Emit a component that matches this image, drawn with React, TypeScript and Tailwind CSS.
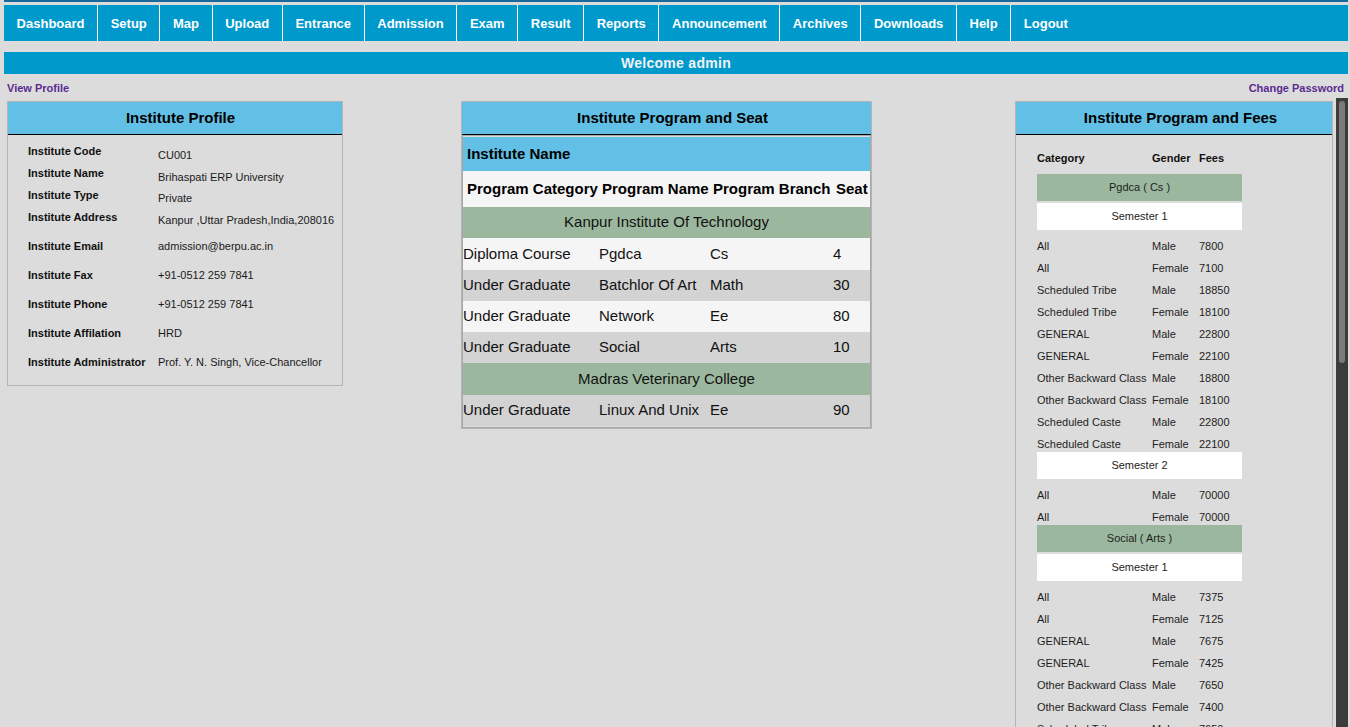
import React from 'react';

const navItems = ['Dashboard', 'Setup', 'Map', 'Upload', 'Entrance', 'Admission', 'Exam', 'Result', 'Reports', 'Announcement', 'Archives', 'Downloads', 'Help', 'Logout'];

const profile: { label: string; value: string; h: string; top: boolean; vm?: string }[] = [
  { label: 'Institute Code', value: 'CU001', h: 'h-[22px]', top: true, vm: 'mt-[4px]' },
  { label: 'Institute Name', value: 'Brihaspati ERP University', h: 'h-[22px]', top: true, vm: 'mt-[4px]' },
  { label: 'Institute Type', value: 'Private', h: 'h-[22px]', top: true, vm: 'mt-[3px]' },
  { label: 'Institute Address', value: 'Kanpur ,Uttar Pradesh,India,208016', h: 'h-[21px]', top: true, vm: 'mt-[3px]' },
  { label: 'Institute Email', value: 'admission@berpu.ac.in', h: 'h-[29px]', top: false },
  { label: 'Institute Fax', value: '+91-0512 259 7841', h: 'h-[29px]', top: false },
  { label: 'Institute Phone', value: '+91-0512 259 7841', h: 'h-[29px]', top: false },
  { label: 'Institute Affilation', value: 'HRD', h: 'h-[29px]', top: false },
  { label: 'Institute Administrator', value: 'Prof. Y. N. Singh, Vice-Chancellor', h: 'h-[29px]', top: false },
];

type SeatRow = { group?: string; cat?: string; name?: string; branch?: string; seat?: string; bg?: string; h: string };

const seats: SeatRow[] = [
  { group: 'Kanpur Institute Of Technology', h: 'h-[31px]' },
  { cat: 'Diploma Course', name: 'Pgdca', branch: 'Cs', seat: '4', bg: 'bg-[#f5f5f5]', h: 'h-[32px]' },
  { cat: 'Under Graduate', name: 'Batchlor Of Art', branch: 'Math', seat: '30', bg: 'bg-[#d3d3d3]', h: 'h-[31px]' },
  { cat: 'Under Graduate', name: 'Network', branch: 'Ee', seat: '80', bg: 'bg-[#f5f5f5]', h: 'h-[31px]' },
  { cat: 'Under Graduate', name: 'Social', branch: 'Arts', seat: '10', bg: 'bg-[#d3d3d3]', h: 'h-[31px]' },
  { group: 'Madras Veterinary College', h: 'h-[32px]' },
  { cat: 'Under Graduate', name: 'Linux And Unix', branch: 'Ee', seat: '90', bg: 'bg-[#d3d3d3]', h: 'h-[31px]' },
];

type Fee = [string, string, string];
type Semester = { title: string; fees: Fee[] };
type Program = { title: string; semesters: Semester[] };

const both = (cat: string, m: string, f: string): Fee[] => [[cat, 'Male', m], [cat, 'Female', f]];

const programs: Program[] = [
  {
    title: 'Pgdca ( Cs )',
    semesters: [
      {
        title: 'Semester 1',
        fees: [
          ...both('All', '7800', '7100'),
          ...both('Scheduled Tribe', '18850', '18100'),
          ...both('GENERAL', '22800', '22100'),
          ...both('Other Backward Class', '18800', '18100'),
          ...both('Scheduled Caste', '22800', '22100'),
        ],
      },
      { title: 'Semester 2', fees: both('All', '70000', '70000') },
    ],
  },
  {
    title: 'Social ( Arts )',
    semesters: [
      {
        title: 'Semester 1',
        fees: [
          ...both('All', '7375', '7125'),
          ...both('GENERAL', '7675', '7425'),
          ...both('Other Backward Class', '7650', '7400'),
          ...both('Scheduled Tribe', '7650', '7400'),
          ...both('Scheduled Caste', '7650', '7400'),
        ],
      },
    ],
  },
];

const App: React.FC = () => {
  return (
    <div className="h-[727px] overflow-hidden bg-[#dcdcdc] font-['Liberation_Sans',Arial,sans-serif] text-black">
      <div className="ml-[4px] mr-[2px] h-[2px] bg-[#17699b]" />
      <div className="ml-[4px] mr-[2px] mt-[3px] flex h-[36px] bg-[#0099cc]">
        {navItems.map((item, i) => (
          <div
            key={item}
            className={`flex items-center px-[12.6px] pt-[1px] text-[13px] font-bold text-white ${i > 0 ? 'border-l border-white' : ''}`}
          >
            {item}
          </div>
        ))}
      </div>

      <div className="ml-[4px] mr-[2px] mt-[11px] flex h-[22px] items-center justify-center bg-[#0099cc] text-[14px] font-bold tracking-[0.3px] text-[#f2f2f2]">
        Welcome admin
      </div>

      <div className="ml-[7px] mr-[6px] mt-[7px] flex h-[15px] items-center justify-between text-[11px] font-bold text-[#5b2b90]">
        <span>View Profile</span>
        <span>Change Password</span>
      </div>

      <div className="ml-[4px] mr-[2px] mt-[2px] flex items-start">
        {/* left column */}
        <div className="w-[448px] pt-[3px]">
          <div className="ml-[3px] w-[336px] border border-[#b4b4b4]">
            <div className="flex h-[33px] items-center justify-center border-b border-black bg-[#62bfe5] pl-[11px] text-[15px] font-bold">
              Institute Profile
            </div>
            <div className="pb-[8px] pl-[20px] pt-[10px]">
              {profile.map((p) => (
                <div key={p.label} className={`flex ${p.h} ${p.top ? 'items-start' : 'items-center'}`}>
                  <div className="w-[130px] text-[11px] font-bold leading-[13px] text-[#111]">{p.label}</div>
                  <div className={`text-[11px] leading-[13px] text-[#1a1a1a] ${p.vm ?? ''}`}>{p.value}</div>
                </div>
              ))}
            </div>
          </div>
        </div>

        {/* middle column */}
        <div className="flex-1 pt-[3px]">
          <div className="ml-[9px] w-[411px] border border-[#b4b4b4]">
            <div className="flex h-[33px] items-center justify-center border-b border-black bg-[#62bfe5] pl-[12px] text-[15px] font-bold">
              Institute Program and Seat
            </div>
            <div className="border border-[#a8a8a8] py-[1px] text-[15px]">
              <div className="flex h-[34px] items-center bg-[#62bfe5] px-[4px] font-bold">Institute Name</div>
              <div className="grid h-[36px] grid-cols-[136px_111px_123px_1fr] items-center bg-[#f5f5f5] font-bold">
                <div className="pl-[4px]">Program Category</div>
                <div className="pl-[3px]">Program Name</div>
                <div className="pl-[3px]">Program Branch</div>
                <div className="pl-[3px]">Seat</div>
              </div>
              {seats.map((r, i) =>
                r.group ? (
                  <div key={i} className={`flex ${r.h} items-center justify-center bg-[#9bb89e] text-[#111]`}>
                    {r.group}
                  </div>
                ) : (
                  <div key={i} className={`grid ${r.h} grid-cols-[136px_111px_123px_1fr] items-center ${r.bg} text-[#111]`}>
                    <div>{r.cat}</div>
                    <div>{r.name}</div>
                    <div>{r.branch}</div>
                    <div>{r.seat}</div>
                  </div>
                )
              )}
            </div>
          </div>
        </div>

        {/* right column: scrolled panel */}
        <div className="flex h-[629px] w-[336px]">
          <div className="h-[629px] w-[324px] overflow-hidden">
            <div className="ml-[3px] mt-[3px] w-[318px] border border-[#b4b4b4]">
              <div className="flex h-[33px] items-center justify-center border-b border-black bg-[#62bfe5] pl-[13px] text-[15px] font-bold">
                Institute Program and Fees
              </div>
              <div className="pb-[12px] pl-[21px] pt-[15px] text-[11px] text-[#1e1e1e]">
                <div className="w-[205px]">
                  <div className="grid h-[16px] grid-cols-[115px_47px_1fr] items-center font-bold text-[#111]">
                    <div>Category</div>
                    <div>Gender</div>
                    <div>Fees</div>
                  </div>
                  <div className="mt-[8px]">
                    {programs.map((p) => (
                      <div key={p.title}>
                        <div className="flex h-[27px] items-center justify-center bg-[#9bb89e]">{p.title}</div>
                        {p.semesters.map((s, si) => (
                          <div key={s.title}>
                            <div className={`flex h-[27px] items-center justify-center bg-white ${si === 0 ? 'mt-[2px]' : ''}`}>
                              {s.title}
                            </div>
                            <div className="pt-[2px]">
                              {s.fees.map((f, i) => (
                                <div key={i} className="grid h-[22px] grid-cols-[115px_47px_1fr] items-center pt-[6px]">
                                  <div className="whitespace-nowrap">{f[0]}</div>
                                  <div>{f[1]}</div>
                                  <div>{f[2]}</div>
                                </div>
                              ))}
                            </div>
                          </div>
                        ))}
                      </div>
                    ))}
                  </div>
                </div>
              </div>
            </div>
          </div>
          <div className="h-[629px] w-[12px] bg-[#3c3c3c] px-[3px] pt-[3px]">
            <div className="h-[262px] rounded-full bg-[#7a7a7a]" />
          </div>
        </div>
      </div>
    </div>
  );
};

export default App;
